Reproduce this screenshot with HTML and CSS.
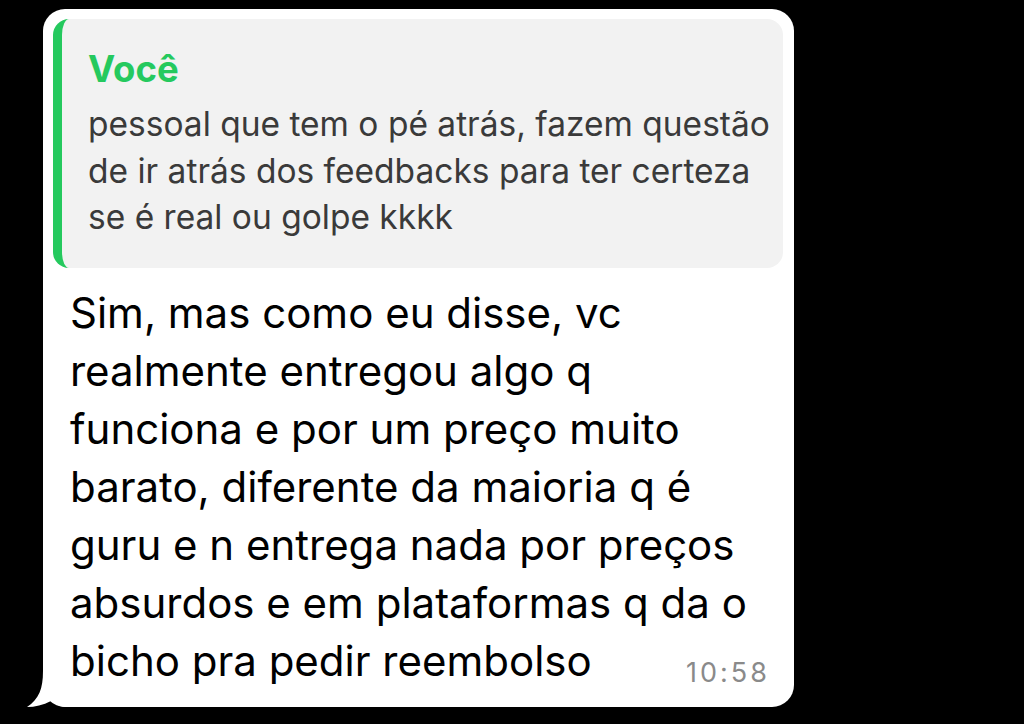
FILE: index.html
```html
<!DOCTYPE html>
<html lang="pt">
<head>
<meta charset="utf-8">
<link rel="stylesheet" href="styles.css">
</head>
<body>
<div class="stage">
  <div class="bubble">
    <div class="quote">
      <div class="quote-author">Você</div>
      <div class="quote-text">pessoal que tem o pé atrás, fazem questão<br>de ir atrás dos feedbacks para ter certeza<br>se é real ou golpe kkkk</div>
    </div>
    <div class="body">
      <div class="message">Sim, mas como eu disse, vc<br>realmente entregou algo q<br>funciona e por um preço muito<br>barato, diferente da maioria q é<br>guru e n entrega nada por preços<br>absurdos e em plataformas q da o<br>bicho pra pedir reembolso</div>
      <div class="time">10:58</div>
    </div>
    <svg class="tail" width="40" height="50" viewBox="0 0 40 50"><path d="M16 0 L16 14 C16 32 12 42 0 50 C8 50 16 48 24 44 C30 48 34 50 40 50 L40 0 Z" fill="#fff"/></svg>
  </div>
</div>
</body>
</html>
```
FILE: styles.css
```css
html, body {
  margin: 0;
  padding: 0;
  background: #000;
}
body {
  width: 1024px;
  height: 724px;
  overflow: hidden;
  font-family: Inter, "Liberation Sans", sans-serif;
}
.stage {
  padding: 9px 0 0 43px;
}
.bubble {
  position: relative;
  width: 751px;
  height: 698px;
  box-sizing: border-box;
  background: #fff;
  border-radius: 22px;
  padding: 10px 11px 10px 10px;
  display: flex;
  flex-direction: column;
}
.quote {
  background: #f2f2f2;
  border-radius: 16px;
  border-left: 9px solid #25c95e;
  height: 249px;
  flex: none;
  box-sizing: border-box;
  padding: 30px 0 0 26px;
  white-space: nowrap;
}
.quote-author {
  color: #25c95e;
  font-weight: 700;
  font-size: 36.5px;
  line-height: 40px;
}
.quote-text {
  color: #3a3a3a;
  font-size: 33.5px;
  line-height: 46.5px;
  margin-top: 12px;
}
.body {
  flex: 1;
  display: grid;
  padding: 16px 0 0 17px;
}
.message {
  grid-area: 1 / 1;
  color: #000;
  font-size: 42px;
  line-height: 58px;
  white-space: nowrap;
}
.time {
  grid-area: 1 / 1;
  justify-self: end;
  align-self: end;
  color: #8a8a8a;
  font-size: 27px;
  line-height: 32px;
  letter-spacing: 3px;
  padding: 0 13px 8px 0;
  white-space: nowrap;
}
.tail {
  position: absolute;
  left: -16px;
  bottom: 0;
}
```
